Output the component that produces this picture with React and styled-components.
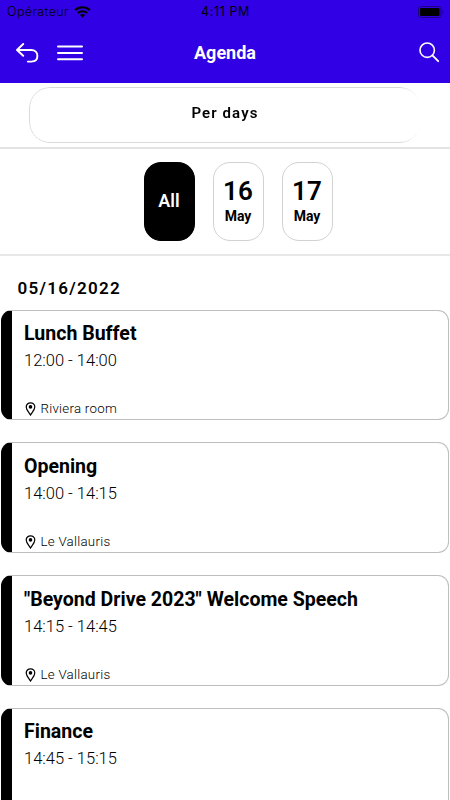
import styled, { createGlobalStyle } from "styled-components"

const GlobalStyle = createGlobalStyle`
    * {
        box-sizing: border-box;
    }

    body {
        margin: 0;
        background-color: #FFFFFF;
        color: #000000;
        font-family: Roboto, "Liberation Sans", sans-serif;
    }

    h1, h2, h3, p {
        margin: 0;
    }

    button {
        font-family: inherit;
        color: inherit;
        padding: 0;
    }
`
const Screen = styled.div`
    width: 100%;
    height: 800px;
    overflow: hidden;
`
const Header = styled.header`
    height: 83.4px;
    background-color: #3200E4;
`
const StatusBar = styled.div`
    display: grid;
    grid-template-columns: 1fr auto 1fr;
    align-items: center;
    height: 23px;
    padding: 0 6px 0 7px;
    font-family: Inter, sans-serif;
    font-size: 12.5px;
    font-weight: 300;
    line-height: 23px;
`
const Carrier = styled.div`
    display: flex;
    align-items: center;
    gap: 5px;
    letter-spacing: 0.4px;
`
const Clock = styled.span`
    font-weight: 400;
    letter-spacing: 0.6px;
`
const Battery = styled.svg`
    justify-self: end;
`
const NavBar = styled.nav`
    display: grid;
    grid-template-columns: 1fr auto 1fr;
    align-items: center;
    height: 59px;
    padding: 0 10px 0 16px;
    color: #FFFFFF;
`
const NavGroup = styled.div`
    display: flex;
    align-items: center;
    gap: 18px;
    justify-content: ${({ $end }) => ($end ? "flex-end" : "flex-start")};
`
const IconButton = styled.button`
    display: flex;
    border: none;
    background: none;
    color: #FFFFFF;
`
const Title = styled.h1`
    font-size: 18px;
    font-weight: 700;
    line-height: 24px;
    padding-right: 6px;
`
const FilterBar = styled.section`
    height: 65.6px;
    padding: 3.6px 29px 0;
    border-bottom: 2px solid #E4E4E4;
`
const Filter = styled.button`
    width: 100%;
    height: 56px;
    border: 1px solid #DADADA;
    border-radius: 21px;
    background: none;
    font-size: 15px;
    font-weight: 600;
    letter-spacing: 1.1px;
    padding-bottom: 4px;
    mask-image: linear-gradient(to right, #000 95%, transparent 99.8%);
`
const Days = styled.section`
    display: flex;
    justify-content: center;
    gap: 18px;
    height: 107px;
    padding: 13px 0 0 26px;
    border-bottom: 2px solid #E8E8E8;
`
const Day = styled.button`
    display: flex;
    flex-direction: column;
    align-items: center;
    justify-content: center;
    width: 51px;
    height: 79px;
    border: 1px solid ${({ $active }) => ($active ? "#000000" : "#D2D2D2")};
    border-radius: 17px;
    background-color: ${({ $active }) => ($active ? "#000000" : "#FFFFFF")};
    color: ${({ $active }) => ($active ? "#FFFFFF" : "#000000")};
    font-size: ${({ $active }) => ($active ? "18px" : "14px")};
    font-weight: ${({ $active }) => ($active ? 600 : 700)};
    padding-bottom: ${({ $active }) => ($active ? "2px" : "0")};
`
const DayNumber = styled.span`
    font-size: 26px;
    font-weight: 600;
    line-height: 30px;
    letter-spacing: 0.2px;
`
const DayMonth = styled.span`
    line-height: 20px;
`
const DateTitle = styled.h2`
    padding: 22px 0 0 17.5px;
    height: 53.9px;
    font-size: 17px;
    font-weight: 600;
    line-height: 20px;
    letter-spacing: 1.3px;
`
const List = styled.div`
    display: flex;
    flex-direction: column;
    gap: 22px;
    padding: 0 1px;
`
const Card = styled.article`
    display: flex;
    flex-shrink: 0;
    height: 110.6px;
    border: 1px solid #BEBEBE;
    border-left: 11px solid #000000;
    border-radius: 11px;
`
const CardBody = styled.div`
    display: flex;
    flex-direction: column;
    width: 100%;
    padding: 10.6px 12px 0;
`
const CardTitle = styled.h3`
    font-size: 19.55px;
    font-weight: 700;
    line-height: 25px;
`
const Hours = styled.p`
    margin-top: 5px;
    font-size: 16.5px;
    font-weight: 300;
    line-height: 20px;
`
const Place = styled.p`
    display: flex;
    align-items: center;
    gap: 4.5px;
    margin-top: 29px;
    padding-left: 1px;
    font-size: 13.3px;
    font-weight: 300;
    line-height: 18px;
    letter-spacing: 0.26px;
`

const events = [
    { title: "Lunch Buffet", hours: "12:00 - 14:00", place: "Riviera room" },
    { title: "Opening", hours: "14:00 - 14:15", place: "Le Vallauris" },
    { title: "\"Beyond Drive 2023\" Welcome Speech", hours: "14:15 - 14:45", place: "Le Vallauris" },
    { title: "Finance", hours: "14:45 - 15:15", place: "" },
]

function WifiIcon () {
    return (
        <svg width="17" height="12" viewBox="0 0 17 12" fill="none" stroke="#000" strokeWidth="2">
            <path d="M1 4.2C5.2 0.2 11.8 0.2 16 4.2" />
            <path d="M3.8 7C6.4 4.6 10.6 4.6 13.2 7" />
            <path d="M8.5 11.6L5.9 9C7.4 7.7 9.6 7.7 11.1 9Z" fill="#000" stroke="none" />
        </svg>
    )
}

function BatteryIcon () {
    return (
        <Battery width="26" height="12" viewBox="0 0 26 12">
            <rect x="0.5" y="0.5" width="22.5" height="11" rx="2.5" fill="none" stroke="#1C0080" />
            <rect x="2" y="2" width="19.5" height="8" rx="1" />
            <path d="M24.5 4V8C25.8 7.4 25.8 4.6 24.5 4Z" fill="#1C0080" />
        </Battery>
    )
}

function BackIcon () {
    return (
        <svg width="23" height="20" viewBox="0 0 23 20" fill="none" stroke="currentColor" strokeWidth="1.9" strokeLinecap="round" strokeLinejoin="round">
            <path d="M7.2 1L1 7L7.2 12.8M1.2 7H15.2C19.1 7 21.4 9.5 21.4 12.8C21.4 16.4 19 18.6 15.4 18.6H11.8" />
        </svg>
    )
}

function MenuIcon () {
    return (
        <svg width="26" height="16" viewBox="0 0 26 16" fill="none" stroke="currentColor" strokeWidth="2" strokeLinecap="round">
            <path d="M1 1.6H25M1 8H25M1 14.2H25" />
        </svg>
    )
}

function SearchIcon () {
    return (
        <svg width="21" height="21" viewBox="0 0 21 21" fill="none" stroke="currentColor" strokeWidth="1.6" strokeLinecap="round">
            <circle cx="8.2" cy="8.2" r="7.2" />
            <path d="M13.4 13.4L19.2 19.2" strokeWidth="1.9" />
        </svg>
    )
}

function PinIcon () {
    return (
        <svg width="11" height="14" viewBox="0 0 11 14" fill="none" stroke="#000" strokeWidth="1.2">
            <path d="M5.5 13C4.3 10.7 1.2 8 1.2 5.1C1.2 2.6 3.1 0.8 5.5 0.8S9.8 2.6 9.8 5.1C9.8 8 6.7 10.7 5.5 13Z" />
            <circle cx="5.5" cy="4.9" r="1.8" fill="#000" stroke="none" />
        </svg>
    )
}

export default function App () {
    return (
        <Screen>
            <GlobalStyle />
            <Header>
                <StatusBar>
                    <Carrier>Opérateur <WifiIcon /></Carrier>
                    <Clock>4:11 PM</Clock>
                    <BatteryIcon />
                </StatusBar>
                <NavBar>
                    <NavGroup>
                        <IconButton aria-label="Back"><BackIcon /></IconButton>
                        <IconButton aria-label="Menu"><MenuIcon /></IconButton>
                    </NavGroup>
                    <Title>Agenda</Title>
                    <NavGroup $end>
                        <IconButton aria-label="Search"><SearchIcon /></IconButton>
                    </NavGroup>
                </NavBar>
            </Header>
            <FilterBar>
                <Filter>Per days</Filter>
            </FilterBar>
            <Days>
                <Day $active>All</Day>
                <Day><DayNumber>16</DayNumber><DayMonth>May</DayMonth></Day>
                <Day><DayNumber>17</DayNumber><DayMonth>May</DayMonth></Day>
            </Days>
            <DateTitle>05/16/2022</DateTitle>
            <List>
                {events.map((event) => (
                    <Card key={event.title}>
                        <CardBody>
                            <CardTitle>{event.title}</CardTitle>
                            <Hours>{event.hours}</Hours>
                            {event.place && <Place><PinIcon />{event.place}</Place>}
                        </CardBody>
                    </Card>
                ))}
            </List>
        </Screen>
    )
}
